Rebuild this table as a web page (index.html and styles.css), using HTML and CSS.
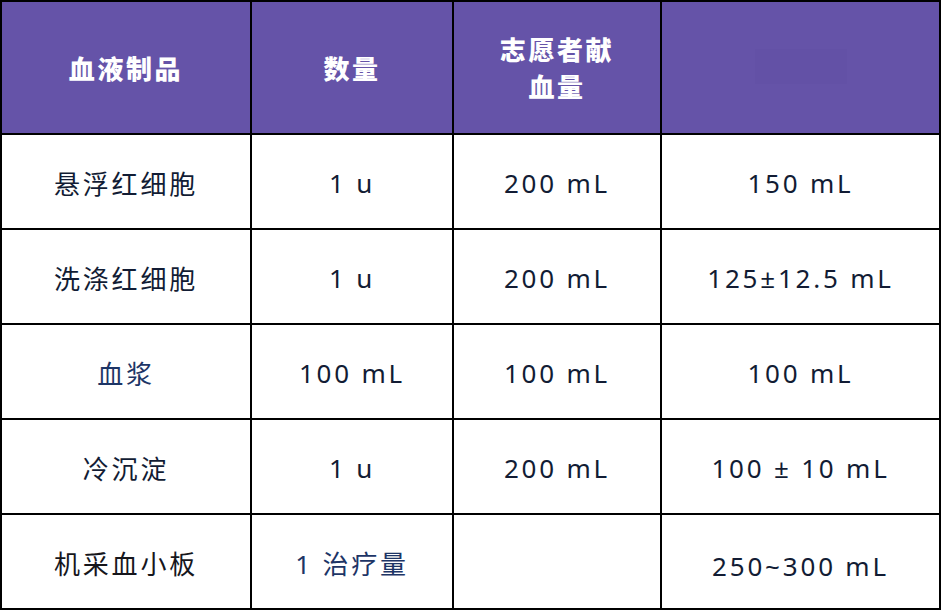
FILE: index.html
```html
<!DOCTYPE html>
<html lang="zh-CN">
<head>
<meta charset="utf-8">
<link rel="stylesheet" href="styles.css">
</head>
<body>
<div class="table">
  <div class="cell head">血液制品</div>
  <div class="cell head">数量</div>
  <div class="cell head two">志愿者献<br>血量</div>
  <div class="cell head"><span class="ghost"></span></div>

  <div class="cell">悬浮红细胞</div>
  <div class="cell">1 u</div>
  <div class="cell">200 mL</div>
  <div class="cell">150 mL</div>

  <div class="cell">洗涤红细胞</div>
  <div class="cell">1 u</div>
  <div class="cell">200 mL</div>
  <div class="cell">125±12.5 mL</div>

  <div class="cell blue">血浆</div>
  <div class="cell">100 mL</div>
  <div class="cell">100 mL</div>
  <div class="cell">100 mL</div>

  <div class="cell">冷沉淀</div>
  <div class="cell">1 u</div>
  <div class="cell">200 mL</div>
  <div class="cell">100 ± 10 mL</div>

  <div class="cell dark">机采血小板</div>
  <div class="cell blue">1 治疗量</div>
  <div class="cell"></div>
  <div class="cell low">250~300 mL</div>
</div>
</body>
</html>
```

FILE: styles.css
```css
html, body {
  margin: 0;
  padding: 0;
  background: #ffffff;
}

.table {
  width: 941px;
  height: 610px;
  box-sizing: border-box;
  display: grid;
  grid-template-columns: 248px 200px 206px 277px;
  grid-template-rows: 131px repeat(5, 93px);
  gap: 2px;
  padding: 2px;
  background: #000000;
  font-family: "Noto Sans", "Noto Sans CJK SC", sans-serif;
}

.cell {
  background: #ffffff;
  display: flex;
  align-items: center;
  justify-content: center;
  text-align: center;
  font-size: 26px;
  letter-spacing: 2.8px;
  color: #121c34;
  white-space: pre;
  padding-top: 2px;
  box-sizing: border-box;
}

.cell.blue {
  color: #1d3566;
}

.cell.dark {
  color: #16161c;
}

.cell.low {
  padding-top: 8px;
}

.head {
  background: #6553a8;
  color: #ffffff;
  font-family: "Noto Sans CJK SC", sans-serif;
  font-weight: 900;
  font-size: 26px;
  letter-spacing: 2.6px;
  padding-top: 0;
}

.head.two {
  line-height: 37px;
  padding-bottom: 2px;
}

.ghost {
  display: block;
  width: 92px;
  height: 35px;
  margin-bottom: 2px;
  background: #6351a6;
}
```
